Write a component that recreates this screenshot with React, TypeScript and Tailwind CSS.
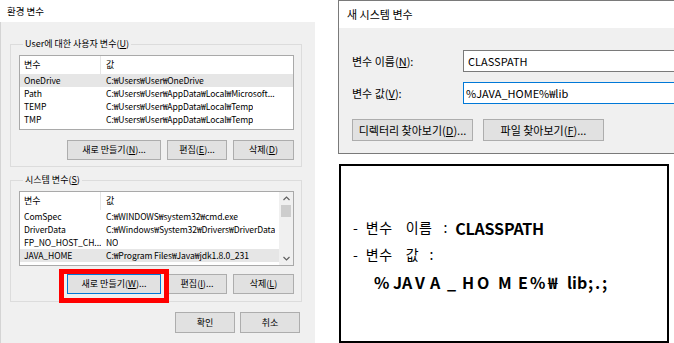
import React from "react";

type Row = { name: string; value: string; selected?: boolean };

const userRows: Row[] = [
  { name: "OneDrive", value: "C:₩Users₩User₩OneDrive", selected: true },
  { name: "Path", value: "C:₩Users₩User₩AppData₩Local₩Microsoft..." },
  { name: "TEMP", value: "C:₩Users₩User₩AppData₩Local₩Temp" },
  { name: "TMP", value: "C:₩Users₩User₩AppData₩Local₩Temp" },
];

const sysRows: Row[] = [
  { name: "ComSpec", value: "C:₩WINDOWS₩system32₩cmd.exe" },
  { name: "DriverData", value: "C:₩Windows₩System32₩Drivers₩DriverData" },
  { name: "FP_NO_HOST_CH...", value: "NO" },
  { name: "JAVA_HOME", value: "C:₩Program Files₩Java₩jdk1.8.0_231", selected: true },
];

function ListView({ rows, scroll }: { rows: Row[]; scroll?: boolean }) {
  return (
    <div className="h-[75px] w-[275px] border border-[#a9a9a9] bg-white flex overflow-hidden">
      <div className="flex-1 flex flex-col min-w-0">
        <div className="h-[18px] flex items-center">
          <div className="w-[81px] h-full pl-[4px] flex items-center border-r border-[#e5e5e5]">변수</div>
          <div className="pl-[5px]">값</div>
        </div>
        {rows.map((r) => (
          <div
            key={r.name}
            className={`h-[13px] flex items-center whitespace-nowrap text-[8.6px] tracking-[-0.1px] ${r.selected ? "bg-[#e6e6e6]" : ""}`}
          >
            <div className="w-[81px] pl-[4px] overflow-hidden">{r.name}</div>
            <div className="pl-[5px] overflow-hidden">{r.value}</div>
          </div>
        ))}
      </div>
      {scroll && (
        <div className="w-[14px] bg-[#f0f0f0] flex flex-col items-center">
          <div className="h-[13px] flex items-center justify-center">
            <svg width="7" height="5" viewBox="0 0 7 5">
              <path d="M0.5 4 L3.5 1 L6.5 4" stroke="#606060" strokeWidth="1.2" fill="none" />
            </svg>
          </div>
          <div className="w-[10px] h-[12px] bg-[#cdcdcd]" />
          <div className="flex-1" />
          <div className="h-[13px] flex items-center justify-center">
            <svg width="7" height="5" viewBox="0 0 7 5">
              <path d="M0.5 1 L3.5 4 L6.5 1" stroke="#606060" strokeWidth="1.2" fill="none" />
            </svg>
          </div>
        </div>
      )}
    </div>
  );
}

function Btn({ children, w, h = "h-[20px]", focus }: { children: React.ReactNode; w: string; h?: string; focus?: boolean }) {
  return (
    <div
      className={`${w} ${h} flex items-center justify-center bg-[#e1e1e1] border ${focus ? "border-[#0078d7]" : "border-[#adadad]"}`}
    >
      {children}
    </div>
  );
}

function U({ children }: { children: React.ReactNode }) {
  return <span className="underline underline-offset-1">{children}</span>;
}

function EnvDialog() {
  return (
    <div className="w-[315px] h-full flex flex-col text-[9px] text-black font-['Noto_Sans_CJK_KR',sans-serif]">
      <div className="h-[22px] bg-white flex items-center pl-[7px] text-[9.5px]">환경 변수</div>
      <div className="flex-1 bg-[#f0f0f0] border-l border-[#d4d4d4] pl-[9px] pr-[14px] flex flex-col">
        <fieldset className="mt-[16px] border border-[#dcdcdc] pl-[8px] pr-[7px] pb-[6px]">
          <legend className="ml-[4px] px-[2px] leading-[12px]">
            User에 대한 사용자 변수(<U>U</U>)
          </legend>
          <div className="pt-[5px]">
            <ListView rows={userRows} />
          </div>
          <div className="mt-[10px] flex justify-end gap-[6px]">
            <Btn w="w-[94px]">새로 만들기(<U>N</U>)...</Btn>
            <Btn w="w-[60px]">편집(<U>E</U>)...</Btn>
            <Btn w="w-[61px]">삭제(<U>D</U>)</Btn>
          </div>
        </fieldset>
        <fieldset className="mt-[7px] border border-[#dcdcdc] pl-[8px] pr-[7px] pb-[7px]">
          <legend className="ml-[4px] px-[2px] leading-[12px]">
            시스템 변수(<U>S</U>)
          </legend>
          <div className="pt-[5px]">
            <ListView rows={sysRows} scroll />
          </div>
          <div className="mt-[8px] flex justify-end gap-[6px]">
            <div className="relative">
              <Btn w="w-[94px]" focus>
                새로 만들기(<U>W</U>)...
              </Btn>
              <div className="absolute left-[-8px] right-[-8px] top-[-5px] bottom-[-9px] border-[5px] border-[#ff0000]" />
            </div>
            <Btn w="w-[60px]">편집(<U>I</U>)...</Btn>
            <Btn w="w-[61px]">삭제(<U>L</U>)</Btn>
          </div>
        </fieldset>
        <div className="mt-[10px] flex justify-end gap-[5px] pr-[1px]">
          <Btn w="w-[60px]" h="h-[21px]">확인</Btn>
          <Btn w="w-[60px]" h="h-[21px]">취소</Btn>
        </div>
      </div>
    </div>
  );
}

function NewVarDialog() {
  return (
    <div className="h-[154px] flex flex-col border-l border-t border-b border-[#7a7a7a] text-[11px] text-black font-['Noto_Sans_CJK_KR',sans-serif]">
      <div className="h-[27px] bg-white flex items-center pl-[8px]">새 시스템 변수</div>
      <div className="flex-1 bg-[#f0f0f0] pl-[13px] pt-[22px]">
        <div className="flex items-center h-[22px]">
          <div className="w-[111px]">
            변수 이름(<U>N</U>):
          </div>
          <div className="flex-1 h-full bg-white border border-[#7a7a7a] border-r-0 flex items-center pl-[4px]">
            CLASSPATH
          </div>
        </div>
        <div className="mt-[10px] flex items-center h-[22px]">
          <div className="w-[111px]">
            변수 값(<U>V</U>):
          </div>
          <div className="flex-1 h-full bg-white border border-[#0078d7] border-r-0 flex items-center pl-[2px]">
            %JAVA_HOME%₩lib
          </div>
        </div>
        <div className="mt-[15px] flex gap-[10px]">
          <Btn w="w-[121px]" h="h-[22px]">
            디렉터리 찾아보기(<U>D</U>)...
          </Btn>
          <Btn w="w-[121px]" h="h-[22px]">
            파일 찾아보기(<U>F</U>)...
          </Btn>
        </div>
      </div>
    </div>
  );
}

const valueChars: { c: string; w: number }[] = [
  { c: "%", w: 19 },
  { c: "J", w: 9 },
  { c: "A", w: 13 },
  { c: "V", w: 15 },
  { c: "A", w: 17 },
  { c: "_", w: 15 },
  { c: "H", w: 15 },
  { c: "O", w: 21 },
  { c: "M", w: 20 },
  { c: "E", w: 12 },
  { c: "%", w: 18 },
  { c: "₩", w: 19 },
  { c: "l", w: 5 },
  { c: "i", w: 5 },
  { c: "b", w: 11 },
  { c: ";", w: 7 },
  { c: ".", w: 7 },
  { c: ";", w: 8 },
];

function NoteBox() {
  return (
    <div className="mt-[10px] ml-[1px] w-[330px] h-[179px] border-2 border-black bg-white pl-[12px] pt-[48px] font-['Noto_Sans_CJK_KR',sans-serif] text-black">
      <div className="h-[27px] flex items-center text-[14px]">
        <span>-</span>
        <span className="ml-[8px] tracking-[0.5px]">변수</span>
        <span className="ml-[13px] tracking-[0.5px]">이름</span>
        <span className="ml-[11px]">:</span>
        <span className="ml-[8px] text-[16px] font-bold tracking-[-0.2px]">CLASSPATH</span>
      </div>
      <div className="h-[27px] flex items-center text-[14px]">
        <span>-</span>
        <span className="ml-[8px] tracking-[0.5px]">변수</span>
        <span className="ml-[13px]">값</span>
        <span className="ml-[11px]">:</span>
      </div>
      <div className="h-[27px] flex items-center pl-[21px] text-[16px] font-bold">
        {valueChars.map((ch, i) => (
          <span key={i} className="inline-block" style={{ width: ch.w }}>
            {ch.c}
          </span>
        ))}
      </div>
    </div>
  );
}

export default function App() {
  return (
    <div className="w-[674px] h-[343px] bg-white flex overflow-hidden">
      <EnvDialog />
      <div className="w-[23px]" />
      <div className="w-[336px] flex flex-col">
        <NewVarDialog />
        <NoteBox />
      </div>
    </div>
  );
}
